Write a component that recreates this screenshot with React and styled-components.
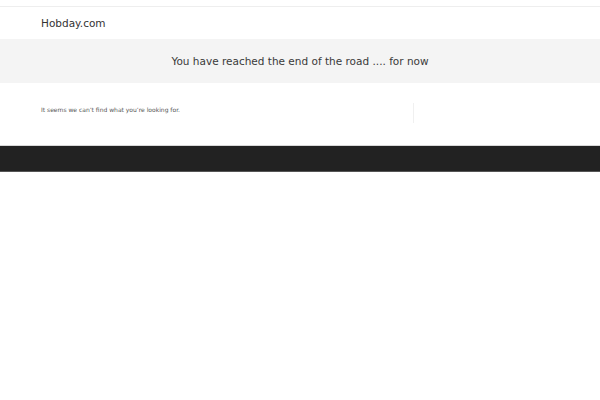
import styled, { createGlobalStyle } from "styled-components";

const Global = createGlobalStyle`
  html, body { margin: 0; padding: 0; background: #fff; }
  body { font-family: "DejaVu Sans", sans-serif; }
`;

const Page = styled.div`
  padding-top: 6px;
`;

const Header = styled.header`
  border-top: 1px solid #eee;
  height: 32px;
  display: flex;
  align-items: center;
  padding: 0 41px;
`;

const Brand = styled.div`
  font-size: 10.5px;
  color: #333;
`;

const Banner = styled.div`
  background: #f4f4f4;
  height: 44px;
  display: flex;
  align-items: center;
  justify-content: center;
`;

const Title = styled.h1`
  margin: 0;
  font-weight: normal;
  font-size: 10.5px;
  color: #3a3a3a;
`;

const Content = styled.div`
  display: flex;
  padding: 20px 41px 0;
  height: 42px;
`;

const Main = styled.div`
  flex: 1;
  font-size: 6px;
  color: #555;
  padding-top: 3px;
`;

const Sidebar = styled.div`
  width: 145px;
  border-left: 1px solid #f0f0f0;
  height: 20px;
`;

const Footer = styled.footer`
  border-top: 1px solid #d8d8d8;
  border-bottom: 1px solid #555;
  background: #222;
  height: 25px;
`;

export default function App() {
  return (
    <Page>
      <Global />
      <Header>
        <Brand>Hobday.com</Brand>
      </Header>
      <Banner>
        <Title>You have reached the end of the road .... for now</Title>
      </Banner>
      <Content>
        <Main>It seems we can’t find what you’re looking for.</Main>
        <Sidebar />
      </Content>
      <Footer />
    </Page>
  );
}
